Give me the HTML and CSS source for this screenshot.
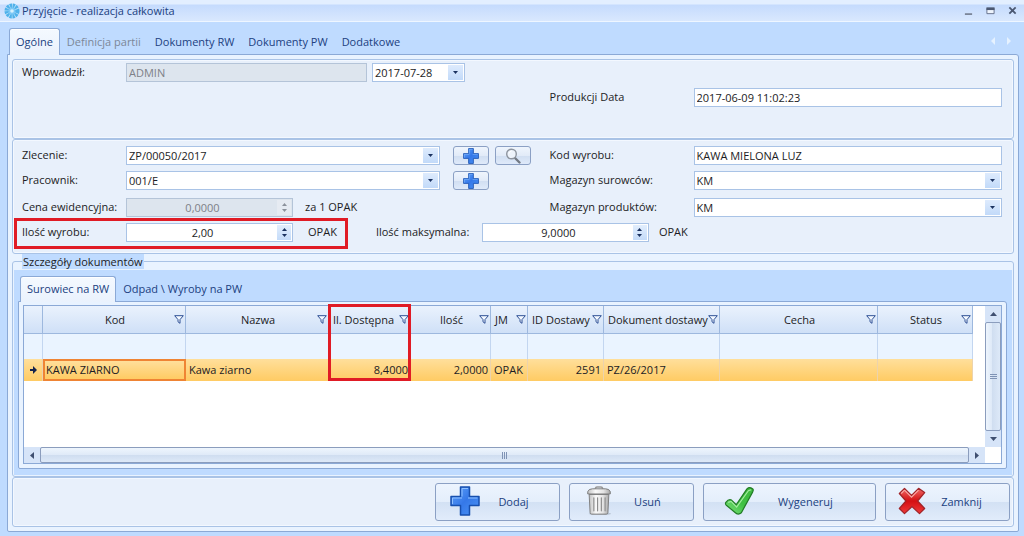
FILE: index.html
```html
<!DOCTYPE html>
<html lang="pl">
<head>
<meta charset="utf-8">
<title>Przyjęcie - realizacja całkowita</title>
<link rel="stylesheet" href="styles.css">
</head>
<body>
<svg class="defs" aria-hidden="true">
  <defs>
    <linearGradient id="g-blue" x1="0" y1="0" x2="1" y2="1"><stop offset="0" stop-color="#62a4fb"/><stop offset=".5" stop-color="#3578e8"/><stop offset="1" stop-color="#4b93f5"/></linearGradient>
    <linearGradient id="g-green" x1="1" y1="0" x2="0" y2="1"><stop offset="0" stop-color="#41b93f"/><stop offset=".5" stop-color="#3fc043"/><stop offset="1" stop-color="#7fe37d"/></linearGradient>
    <linearGradient id="g-red" x1="0" y1="0" x2="0" y2="1"><stop offset="0" stop-color="#ef6a66"/><stop offset=".5" stop-color="#d40f12"/><stop offset="1" stop-color="#ee3a3a"/></linearGradient>
    <linearGradient id="g-metal" x1="0" y1="0" x2="1" y2="0"><stop offset="0" stop-color="#c2c2c2"/><stop offset=".35" stop-color="#fafafa"/><stop offset=".7" stop-color="#e4e4e4"/><stop offset="1" stop-color="#a8a8a8"/></linearGradient>
  </defs>
  <symbol id="plus" viewBox="0 0 30 30"><path d="M10.5 1h9v9.500H29v9h-9.500V29h-9v-9.500H1v-9h9.500z" fill="url(#g-blue)" stroke="#174fae" stroke-width="1.500" stroke-linejoin="round"/><path d="M12 10.500V2.500h6M2.500 18v-6H12M18 12h9.500" fill="none" stroke="#8fc0ff" stroke-width="1"/></symbol>
  <symbol id="funnel" viewBox="0 0 10 9"><path d="M.7.700h8.600L6 4.600v3.700L4 6.800V4.600z" fill="#f4f9ff" stroke="#2d4f94" stroke-width="1"/></symbol>
  <symbol id="down" viewBox="0 0 5 3"><path d="M0 0h5L2.500 3z" fill="currentColor"/></symbol>
  <symbol id="up" viewBox="0 0 5 3"><path d="M0 3h5L2.500 0z" fill="currentColor"/></symbol>
</svg>

<header class="titlebar">
  <svg class="logo" viewBox="0 0 16 16" aria-hidden="true"><circle cx="8" cy="8" r="7.500" fill="#bfe4fb"/><circle cx="8" cy="8" r="5" fill="none" stroke="#4fb1ea" stroke-width="5" stroke-dasharray="2 .618"/><circle cx="8" cy="8" r="3.500" fill="#7cc8f6"/><circle cx="8" cy="8" r="1.800" fill="#d8f1fd"/></svg>
  <h1 class="title">Przyjęcie - realizacja całkowita</h1>
  <button class="winbtn" aria-label="Minimalizuj"><svg viewBox="0 0 10 10"><path d="M1 9h8" stroke="#7b8699" stroke-width="2"/></svg></button>
  <button class="winbtn" aria-label="Maksymalizuj"><svg viewBox="0 0 10 10"><path d="M1 2.500v6h8v-6" fill="#eef4fd" stroke="#5d6a84"/><path d="M.5 3h9" stroke="#4b5872" stroke-width="3"/></svg></button>
  <button class="winbtn" aria-label="Zamknij okno"><svg viewBox="0 0 10 10"><path d="M1.500 1.500l7 7m0-7l-7 7" stroke="#4b5872" stroke-width="2"/></svg></button>
</header>

<main class="window">
  <nav class="tabs" aria-label="Zakładki">
    <button class="tab tab-active">Ogólne</button>
    <button class="tab" disabled>Definicja partii</button>
    <button class="tab">Dokumenty RW</button>
    <button class="tab">Dokumenty PW</button>
    <button class="tab">Dodatkowe</button>
    <span class="tab-scroll" aria-hidden="true">
      <svg viewBox="0 0 4 8"><path d="M4 0v8L0 4z" fill="#e6f2ff"/></svg>
      <svg viewBox="0 0 4 8"><path d="M0 0v8l4-4z" fill="#e6f2ff"/></svg>
    </span>
  </nav>

  <div class="page">
    <section class="group group-entry">
      <div class="row">
        <div class="side-left">
          <label class="label" for="author">Wprowadził:</label>
          <input class="field author" id="author" value="ADMIN" disabled>
          <span class="combo date"><input aria-label="Data" value="2017-07-28"><button class="drop" aria-label="Kalendarz"><svg><use href="#down"/></svg></button></span>
        </div>
        <div class="side-right"></div>
      </div>
      <div class="row">
        <div class="side-left"></div>
        <div class="side-right">
          <label class="label label-wide" for="prod">Produkcji Data</label>
          <input class="field grow" id="prod" value="2017-06-09 11:02:23">
        </div>
      </div>
    </section>

    <section class="group group-order">
      <div class="row">
        <div class="side-left">
          <label class="label" for="order">Zlecenie:</label>
          <span class="combo grow"><select id="order"><option>ZP/00050/2017</option></select><span class="drop"><svg><use href="#down"/></svg></span></span>
          <span class="tools">
            <button class="tool" aria-label="Dodaj zlecenie"><svg class="tool-plus"><use href="#plus"/></svg></button>
            <button class="tool" aria-label="Szukaj zlecenia"><svg class="tool-find" viewBox="0 0 16 16"><path d="M10 10l4.500 4.500" stroke="#737a84" stroke-width="2.400" stroke-linecap="round"/><circle cx="6.500" cy="6" r="4.800" fill="#edf3fb" stroke="#8d949e" stroke-width="1.400"/><path d="M4 5.500a3 3 0 0 1 2.500-2.300" fill="none" stroke="#fff"/></svg></button>
          </span>
        </div>
        <div class="side-right">
          <label class="label label-wide" for="code">Kod wyrobu:</label>
          <input class="field grow" id="code" value="KAWA MIELONA LUZ">
        </div>
      </div>
      <div class="row">
        <div class="side-left">
          <label class="label" for="worker">Pracownik:</label>
          <span class="combo grow"><select id="worker"><option>001/E</option></select><span class="drop"><svg><use href="#down"/></svg></span></span>
          <span class="tools">
            <button class="tool" aria-label="Dodaj pracownika"><svg class="tool-plus"><use href="#plus"/></svg></button>
          </span>
        </div>
        <div class="side-right">
          <label class="label label-wide" for="raw">Magazyn surowców:</label>
          <span class="combo grow"><select id="raw"><option>KM</option></select><span class="drop"><svg><use href="#down"/></svg></span></span>
        </div>
      </div>
      <div class="row row-spaced">
        <div class="side-left">
          <label class="label" for="price">Cena ewidencyjna:</label>
          <span class="combo spin spin-off"><input id="price" value="0,0000" disabled><span class="arrows"><button disabled aria-label="Cena w górę"><svg><use href="#up"/></svg></button><button disabled aria-label="Cena w dół"><svg><use href="#down"/></svg></button></span></span>
          <span class="unit">za 1 OPAK</span>
        </div>
        <div class="side-right">
          <label class="label label-wide" for="goods">Magazyn produktów:</label>
          <span class="combo grow"><select id="goods"><option>KM</option></select><span class="drop"><svg><use href="#down"/></svg></span></span>
        </div>
      </div>
      <div class="row">
        <div class="quantity">
          <label class="label" for="qty">Ilość wyrobu:</label>
          <span class="combo spin"><input id="qty" value="2,00"><span class="arrows"><button aria-label="Ilość w górę"><svg><use href="#up"/></svg></button><button aria-label="Ilość w dół"><svg><use href="#down"/></svg></button></span></span>
          <span class="unit">OPAK</span>
          <span class="mark mark-quantity"></span>
        </div>
        <div class="quantity">
          <label class="label" for="max">Ilość maksymalna:</label>
          <span class="combo spin"><input id="max" value="9,0000"><span class="arrows"><button aria-label="Maksimum w górę"><svg><use href="#up"/></svg></button><button aria-label="Maksimum w dół"><svg><use href="#down"/></svg></button></span></span>
          <span class="unit unit-near">OPAK</span>
        </div>
      </div>
    </section>

    <fieldset class="details">
      <legend>Szczegóły dokumentów</legend>
      <div class="well">
        <nav class="tabs tabs-inner" aria-label="Dokumenty">
          <button class="tab tab-active">Surowiec na RW</button>
          <button class="tab">Odpad \ Wyroby na PW</button>
        </nav>
        <div class="sheet">
          <div class="grid">
            <div class="viewport">
              <table>
                <colgroup><col class="c-mark"><col class="c-name"><col class="c-name"><col class="c-avail"><col class="c-qty"><col class="c-unit"><col class="c-id"><col class="c-doc"><col class="c-trait"><col class="c-status"></colgroup>
                <thead>
                  <tr>
                    <th></th>
                    <th><span class="head">Kod<svg><use href="#funnel"/></svg></span></th>
                    <th><span class="head">Nazwa<svg><use href="#funnel"/></svg></span></th>
                    <th class="marked"><span class="head head-tight">Il. Dostępna<svg><use href="#funnel"/></svg></span><span class="mark mark-column"></span></th>
                    <th><span class="head">Ilość<svg><use href="#funnel"/></svg></span></th>
                    <th><span class="head head-tight">JM<svg><use href="#funnel"/></svg></span></th>
                    <th><span class="head head-tight">ID Dostawy<svg><use href="#funnel"/></svg></span></th>
                    <th><span class="head head-tight">Dokument dostawy<svg><use href="#funnel"/></svg></span></th>
                    <th><span class="head">Cecha<svg><use href="#funnel"/></svg></span></th>
                    <th><span class="head">Status<svg><use href="#funnel"/></svg></span></th>
                  </tr>
                </thead>
                <tbody>
                  <tr class="filter"><td></td><td></td><td></td><td></td><td></td><td></td><td></td><td></td><td></td><td></td></tr>
                  <tr class="selected">
                    <td class="pointer"><svg viewBox="0 0 7 8"><path d="M0 3h3V0l4 4-4 4V5H0z" fill="#16244d"/></svg></td>
                    <td class="current">KAWA ZIARNO</td><td>Kawa ziarno</td><td class="num">8,4000</td><td class="num">2,0000</td><td>OPAK</td><td class="num">2591</td><td>PZ/26/2017</td><td></td><td></td>
                  </tr>
                </tbody>
              </table>
            </div>
            <div class="vbar" aria-hidden="true">
              <svg class="bar-arrow" viewBox="0 0 16 16"><path d="M5 10h7L8.500 6z" fill="#3f4f70"/></svg>
              <span class="thumb"><span class="grip"></span></span>
              <svg class="bar-arrow" viewBox="0 0 16 16"><path d="M5 6h7l-3.500 4z" fill="#3f4f70"/></svg>
            </div>
            <div class="hbar" aria-hidden="true">
              <svg class="bar-arrow" viewBox="0 0 16 16"><path d="M10 5v7L6 8.500z" fill="#3f4f70"/></svg>
              <span class="thumb"><span class="grip"></span></span>
              <svg class="bar-arrow" viewBox="0 0 16 16"><path d="M6 5v7l4-3.500z" fill="#3f4f70"/></svg>
            </div>
          </div>
        </div>
      </div>
    </fieldset>

    <footer class="group actions">
      <button class="action"><svg class="icon-add"><use href="#plus"/></svg><span>Dodaj</span></button>
      <button class="action"><svg viewBox="0 0 32 32"><ellipse cx="17" cy="29.500" rx="12" ry="1.500" fill="#b9c4d3"/><path d="M5.500 9h21l-1 19.500q-.2 1.500-1.700 1.500H8.200q-1.500 0-1.700-1.500z" fill="url(#g-metal)" stroke="#7c7c7c"/><path d="M10.500 12.500v14M14.500 12.500v14M18.500 12.500v14M22.500 12.500v14" stroke="#8a8a8a" stroke-width="1.200" stroke-linecap="round"/><path d="M12 3.500q0-2.500 2-2.500h4q2 0 2 2.500" fill="none" stroke="#999" stroke-width="1.500"/><path d="M4 8.500V6q1-3 5-3h14q4 0 5 3v2.500z" fill="url(#g-metal)" stroke="#777"/></svg><span>Usuń</span></button>
      <button class="action action-wide"><svg viewBox="0 0 32 32"><path d="M2 17.500q3-4 6-2.500l5 5L24.500 3q3-3 6.500.5.500 1-.5 3L18.500 28.500q-3.500 3-7-.5L2.500 20.500q-1.500-1.500-.5-3z" fill="url(#g-green)" stroke="#217c25" stroke-width="1.300" stroke-linejoin="round"/><path d="M4.500 17.500l3-1 6 6L26 5l3-1" fill="none" stroke="#a5eda0" stroke-width="1.200"/></svg><span>Wygeneruj</span></button>
      <button class="action action-close"><svg viewBox="0 0 32 32"><path d="M8 2.500l7.500 7.500L23 2.500 29.500 7l-7.500 9 7.500 8-5.500 5.500-8-7.500-8 7.500L2.500 24l7-8-7-8z" fill="url(#g-red)" stroke="#a02327" stroke-width="1.300" stroke-linejoin="round"/><path d="M4.500 8L8 4.500l7.500 7.500L23 4.500" fill="none" stroke="#f8a9a5" stroke-width="1.200"/></svg><span>Zamknij</span></button>
    </footer>
  </div>
</main>
</body>
</html>
```
FILE: styles.css
```css
:root {
  --face: #e8f0fb;
  --blue: #bfdbff;
  --line: #8ba9d6;
  --soft: #a9c3e6;
  --ink: #1c1c24;
  --navy: #21417f;
  --alert: #e01b25;
}
* { box-sizing: border-box; }
body {
  margin: 0;
  min-height: 100vh;
  display: flex;
  flex-direction: column;
  background: var(--blue);
  color: var(--ink);
  font: 11px/15px "Open Sans", "Noto Sans", sans-serif;
}
button, input, select { font: inherit; color: inherit; margin: 0; padding: 0; border: 0; background: none; border-radius: 0; }
svg { display: block; }
.defs { position: absolute; width: 0; height: 0; }

.titlebar {
  display: flex;
  align-items: center;
  height: 22px;
  padding: 0 1px 0 4px;
  border-bottom: 1px solid #eef6ff;
  background: linear-gradient(#e3efff 0, #e3efff 4px, #c5dbfd 5px, #d9e8fe 100%);
}
.logo { width: 16px; height: 16px; }
.title { flex: 1; margin: 0 0 0 2px; font-size: 11px; font-weight: 400; color: var(--navy); }
.winbtn { width: 22px; height: 16px; display: grid; place-items: center; }
.winbtn svg { width: 9px; height: 9px; }

.window { flex: 1; display: flex; flex-direction: column; padding: 6px 5px 6px 7px; }
.tabs { display: flex; height: 26px; padding-left: 2px; }
.tab {
  height: 27px;
  padding: 0 8px 2px;
  border: 1px solid transparent;
  border-bottom: 0;
  color: var(--navy);
  white-space: nowrap;
}
.tab:disabled { color: #7c8798; }
.tab + .tab { padding: 0 6px 2px; }
.tab-active {
  padding: 0 6px 2px;
  border-color: var(--line);
  border-radius: 3px 3px 0 0;
  background: linear-gradient(#f4f9ff, #eaf2fd);
  box-shadow: inset 0 1px #fff;
  z-index: 1;
}
.tab-scroll { display: flex; align-items: center; gap: 12px; margin-left: auto; padding-right: 8px; }
.tab-scroll svg { width: 4px; height: 8px; }

.page {
  flex: 1;
  display: flex;
  flex-direction: column;
  padding: 4px;
  border: 1px solid var(--line);
  border-radius: 0 3px 2px 2px;
  background: #e9f3ff;
}
.group {
  border: 1px solid var(--soft);
  border-radius: 3px;
  background: var(--face);
  box-shadow: inset 0 0 0 1px #f3f8ff;
}
.group-entry { min-height: 80px; padding: 3px 11px 0 9px; }
.group-order { padding: 6px 11px 11px 9px; }
.row { display: flex; gap: 18px; min-height: 19px; }
.row + .row { margin-top: 6px; }
.row + .row-spaced { margin-top: 8px; }
.side-left { flex: 509 1 0; display: flex; min-width: 0; }
.side-right { flex: 452 1 0; display: flex; min-width: 0; }
.label { flex: none; width: 104px; line-height: 18px; }
.label-wide { width: 144px; }
.grow { flex: 1; min-width: 0; }
.field { height: 19px; padding: 0 2px; border: 1px solid var(--soft); background: #fff; }
.field:disabled { background: #dde5ee; border-color: #b4c4d8; color: #7d8188; }
.author { flex: 0 1 241px; min-width: 0; margin-right: 5px; }

.combo { display: grid; height: 19px; border: 1px solid var(--soft); background: #fff; }
.combo > * { grid-area: 1 / 1; }
.combo input, .combo select { width: 100%; height: 17px; min-width: 0; padding: 0 2px; appearance: none; }
.date { width: 93px; }
.drop {
  justify-self: end;
  width: 15px;
  height: 15px;
  margin: 1px;
  display: grid;
  place-items: center;
  background: linear-gradient(#deebfd, #c2daf9);
  color: #1b3260;
  pointer-events: none;
}
.drop svg, .arrows svg { width: 5px; height: 3px; }
.spin { width: 167px; }
.combo.spin input { padding-right: 16px; text-align: center; }
.arrows { justify-self: end; display: flex; flex-direction: column; width: 14px; height: 15px; margin: 1px; padding: 1px 0; background: linear-gradient(#e2eefd, #c4dbf9); color: #1b3260; }
.arrows button { flex: 1; display: grid; place-items: center; }
.spin-off { background: #dde5ee; border-color: #b4c4d8; color: #7d8188; }
.spin-off .arrows { background: #e6ebf2; color: #8c929c; }
.unit { margin-left: 12px; line-height: 18px; }
.unit-near { margin-left: 10px; }
.tools { display: flex; gap: 6px; width: 92px; padding-left: 13px; }
.tool {
  width: 36px;
  height: 19px;
  display: grid;
  place-items: center;
  border: 1px solid #8ba0c4;
  border-radius: 3px;
  background: linear-gradient(#eff5fd 0, #e2ebf8 50%, #d0def1 51%, #dfeafa 100%);
}
.tool-plus { width: 16px; height: 16px; }
.tool-find { width: 16px; height: 16px; }
.quantity { position: relative; display: flex; }
.quantity + .quantity { margin-left: 21px; }
.quantity:first-child .unit { margin-left: 15px; }
.quantity + .quantity .label { width: 106px; }
.mark { position: absolute; border: 3px solid var(--alert); pointer-events: none; }
.mark-quantity { inset: -5px -11px -7px -8px; }

.details {
  min-width: 0;
  margin: 0;
  padding: 1px;
  border: 1px solid var(--soft);
  border-radius: 3px;
}
.details legend { margin-left: 8px; padding: 0 1px; line-height: 15px; background: var(--blue); }
.well { padding: 6px 5px 6px 4px; background: var(--blue); }
.tabs-inner { height: 25px; }
.tabs-inner .tab { height: 26px; }
.sheet { padding: 3px 4px 4px; border: 1px solid var(--line); border-radius: 0 3px 2px 2px; background: #e9f3ff; }
.grid {
  display: grid;
  grid-template-columns: minmax(0, 1fr) 16px;
  grid-template-rows: minmax(141px, auto) 16px;
  border: 1px solid var(--line);
  background: #fff;
}
.viewport { padding-right: 12px; }
table { width: 100%; table-layout: fixed; border-collapse: separate; border-spacing: 0; }
.c-mark { width: 19px; }
.c-name { width: 143px; }
.c-avail { width: 82px; }
.c-qty { width: 80px; }
.c-unit { width: 37px; }
.c-id { width: 76px; }
.c-doc { width: 116px; }
.c-trait { width: 158px; }
.c-status { width: 95px; }
th, td { padding: 0 3px; border-right: 1px solid #c3d6f0; text-align: left; font-weight: 400; white-space: nowrap; }
th { height: 28px; padding-right: 1px; border-right-color: #9db8de; border-bottom: 1px solid #9db8de; background: linear-gradient(#eaf2fd, #cfe0f7); }
.head { display: grid; grid-template-columns: 10px 1fr 10px; align-items: center; text-align: center; }
.head::before { content: ""; }
.head-tight { grid-template-columns: 1fr 10px; text-align: left; padding-left: 1px; }
.head-tight::before { display: none; }
.head svg { width: 10px; height: 9px; }
.marked { position: relative; }
.mark-column { inset: -2px -1px -48px -1px; }
.filter td { height: 25px; background: #eaf4ff; }
.selected td { height: 22px; padding-bottom: 1px; border-right-color: #ecd3ac; background: linear-gradient(#ffdf9b, #ffcb63); }
.selected td.current { border: 2px solid #ef8434; padding-left: 1px; }
.selected .pointer { padding-left: 6px; }
.pointer svg { width: 7px; height: 8px; }
.selected .num { text-align: right; padding-right: 2px; }

.vbar { display: flex; flex-direction: column; background: #d6e4f8; }
.hbar { display: flex; background: #d6e4f8; }
.bar-arrow { flex: none; width: 16px; height: 16px; }
.thumb { flex: 1; display: grid; place-items: center; border: 1px solid #8b9dbd; border-radius: 2px; background: linear-gradient(#eef5fd 0, #dfeaf8 50%, #cfddf0 51%, #dde9f8 100%); }
.vbar .thumb { background: linear-gradient(90deg, #eef5fd 0, #dfeaf8 40%, #cfddf0 41%, #dde9f8 100%); }
.grip { width: 5px; height: 7px; background: repeating-linear-gradient(90deg, #7f93b5 0, #7f93b5 1px, transparent 1px, transparent 2px); }
.vbar .grip { width: 7px; height: 5px; background: repeating-linear-gradient(#7f93b5 0, #7f93b5 1px, transparent 1px, transparent 2px); }

.actions { flex: 1; display: flex; justify-content: flex-end; align-items: flex-start; gap: 9px; padding: 5px 3px; }
.action {
  display: flex;
  align-items: center;
  width: 125px;
  height: 38px;
  padding: 0 12px 2px 14px;
  border: 1px solid #8ba0c4;
  border-radius: 3px;
  background: linear-gradient(#edf4fe 0, #e4eefb 50%, #d3e1f4 51%, #e1ecfb 100%);
  color: var(--navy);
}
.action svg { flex: none; width: 30px; height: 30px; }
.action span { flex: 1; text-align: center; }
.action-wide { width: 173px; padding: 0 18px 2px 20px; }
.action-close { padding: 0 13px 2px 11px; }
```
